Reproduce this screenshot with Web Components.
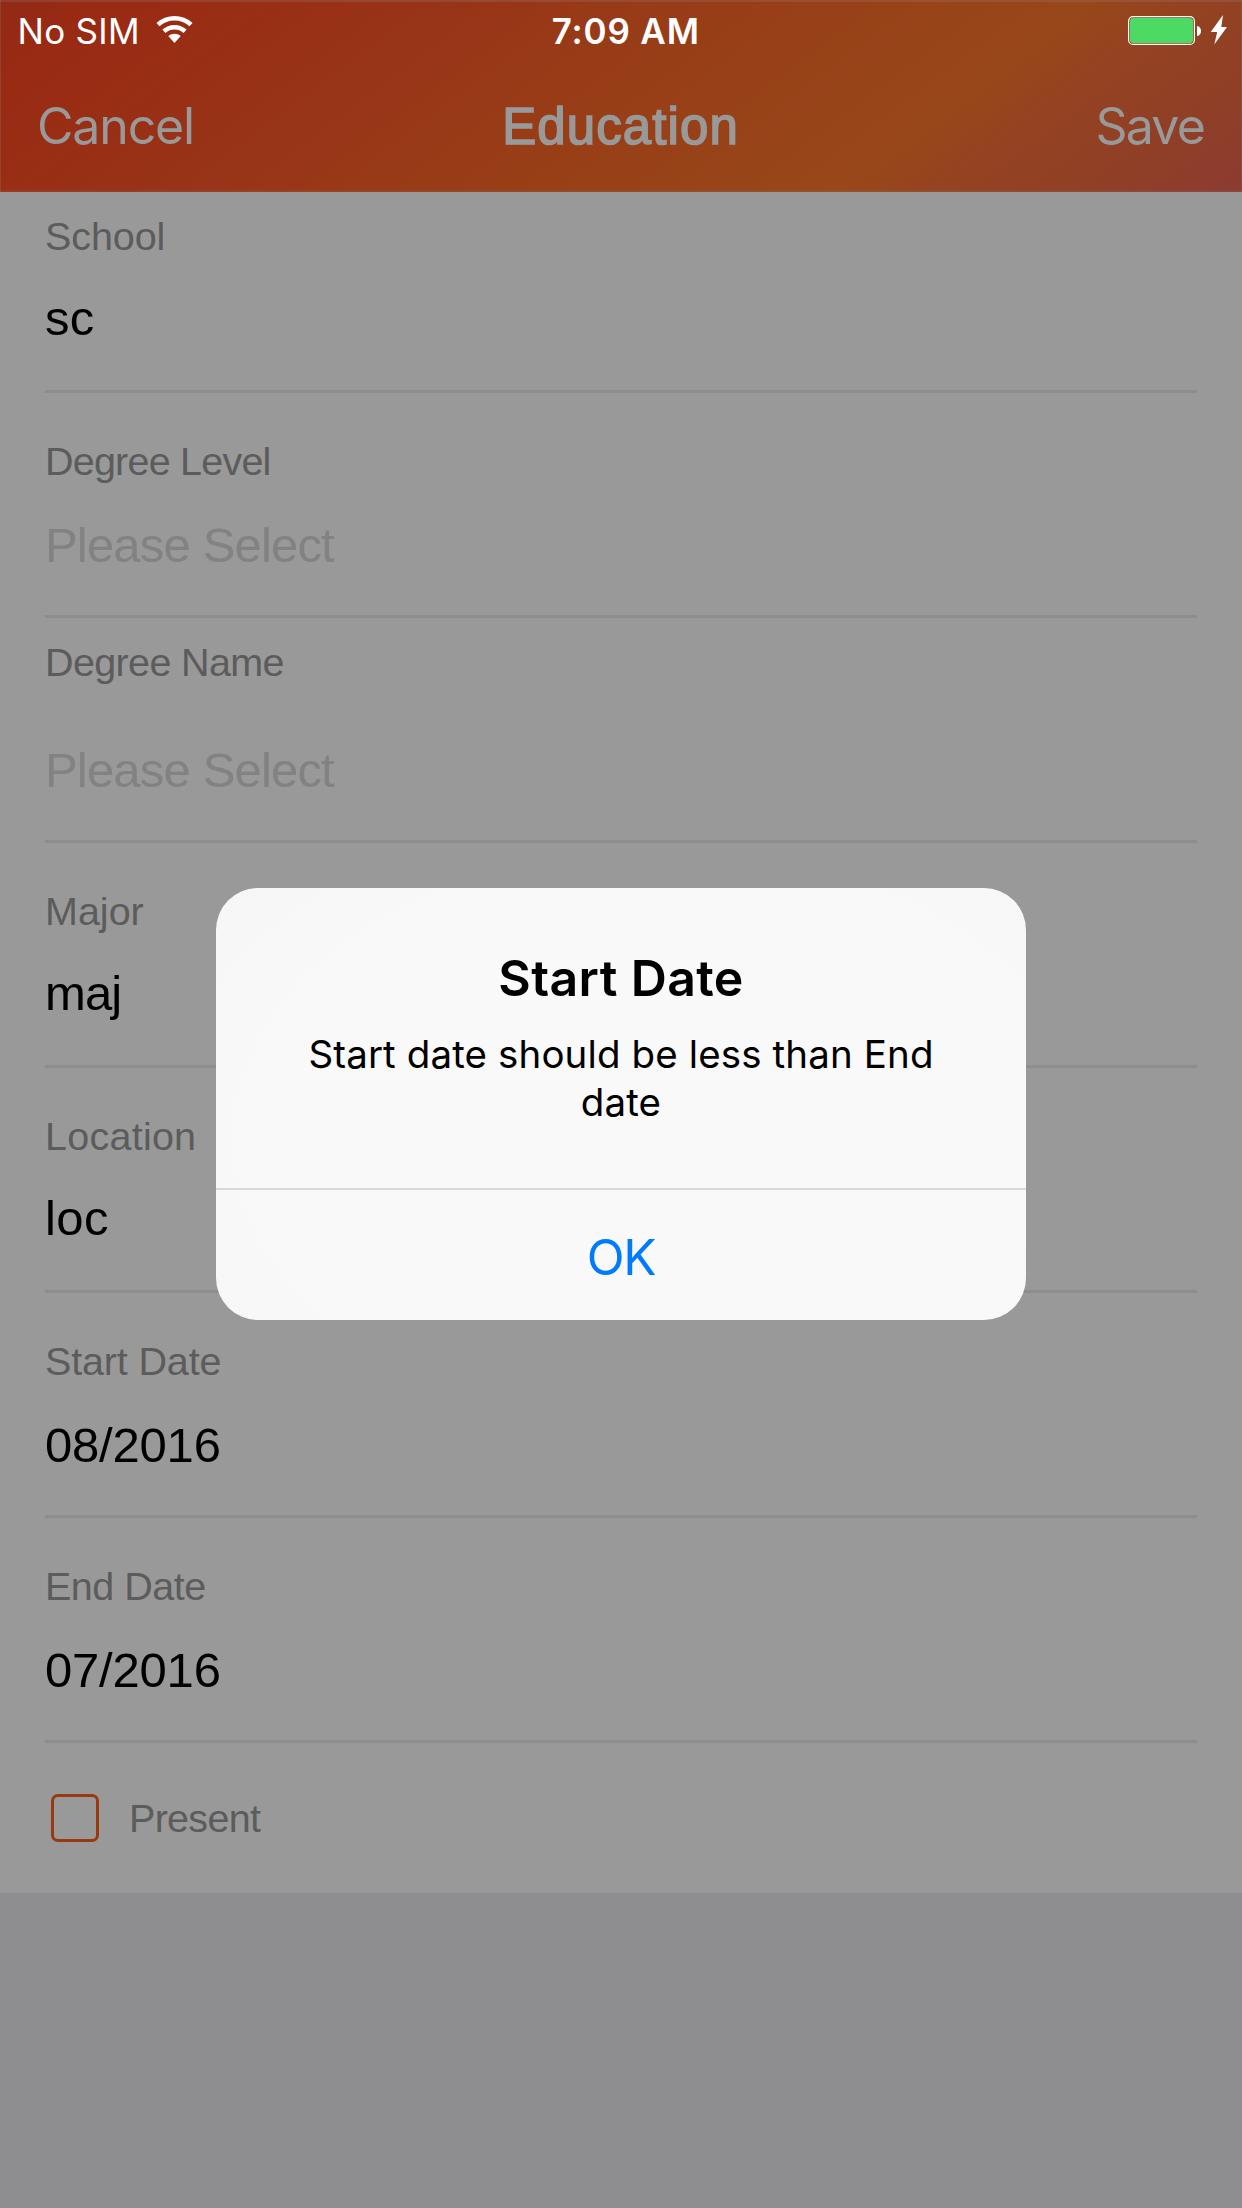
<!DOCTYPE html>
<html lang="en">
<head>
<meta charset="utf-8">
<title>Education</title>
<style>
html,body{margin:0;padding:0;height:100%}
body{background:#8e8e91;font-family:"Liberation Sans",sans-serif}
</style>
</head>
<body>
<education-screen></education-screen>

<template id="t-screen">
<style>
:host{display:flex;flex-direction:column;height:2208px;width:1242px;background:#8e8e91;position:relative;overflow:hidden}
header{box-sizing:border-box;height:192px;display:flex;flex-direction:column;gap:34px;
  background:linear-gradient(143deg,#902a16 0%,#992a13 7%,#983417 30%,#983e17 50%,#98471a 73%,#944221 80%,#8f3f27 91%,#8c3b30 99%);
  box-shadow:inset 0 2px 0 rgba(150,150,150,.2),inset 0 -2px 0 rgba(150,150,150,.12),inset 1px 0 0 rgba(150,150,150,.2),inset -1px 0 0 rgba(150,150,150,.2)}
main{background:#999;height:1701px;display:flex;flex-direction:column}
</style>
<header>
  <status-bar></status-bar>
  <nav-bar><span slot="left">Cancel</span><span slot="title">Education</span><span slot="right">Save</span></nav-bar>
</header>
<main>
  <form-field class="first" style="--ls:-.1px;--vs:.3px"><span slot="label">School</span>sc</form-field>
  <form-field picker placeholder style="--ls:-.78px;--vs:-.83px"><span slot="label">Degree Level</span>Please Select</form-field>
  <form-field picker placeholder class="raised" style="--ls:-.64px;--vs:-.83px"><span slot="label">Degree Name</span>Please Select</form-field>
  <form-field style="--ls:0px;--vs:-.9px"><span slot="label">Major</span>maj</form-field>
  <form-field style="--ls:.25px;--vs:.4px"><span slot="label">Location</span>loc</form-field>
  <form-field picker style="--ls:-.15px;--vs:-.2px"><span slot="label">Start Date</span>08/2016</form-field>
  <form-field picker style="--ls:-.5px;--vs:-.2px"><span slot="label">End Date</span>07/2016</form-field>
  <check-row>Present</check-row>
</main>
<alert-dialog><span slot="title">Start Date</span>Start date should be less than End date<span slot="action">OK</span></alert-dialog>
</template>

<template id="t-status">
<style>
:host{display:grid;grid-template-columns:1fr auto 1fr;height:62px;font:400 35px/62px Inter,sans-serif;color:#fff;box-sizing:border-box;padding:0 15px 0 17.5px}
.l,.r{display:flex;align-items:flex-start}
.l span{letter-spacing:.28px;width:138px}
.t{font-weight:600;letter-spacing:.85px;padding-left:7px}
.r{justify-content:flex-end}
svg{display:block}
.wifi{margin-top:15px}
</style>
<div class="l"><span>No SIM</span>
<svg class="wifi" width="37" height="29" viewBox="-18.5 -28 37 29"><g fill="none" stroke="#fff"><path stroke-width="4.6" d="M-16.5-18.4A24.7 24.7 0 0 1 16.5-18.4"/><path stroke-width="4.6" d="M-10.6-11.7A15.8 15.8 0 0 1 10.6-11.7"/></g><path fill="#fff" d="M0 0-6.2-6.9A9.3 9.3 0 0 1 6.2-6.9Z"/></svg></div>
<div class="t">7:09 AM</div>
<div class="r"><svg width="100" height="60" viewBox="1127 0 100 60"><rect x="1128.6" y="16.6" width="65.8" height="27.8" rx="4.5" fill="none" stroke="#fff" stroke-width="1.2"/><rect x="1130" y="18" width="63" height="25" rx="3" fill="#4cd964"/><path fill="#fff" d="M1197 26c2.8 .4 4 2.4 4 5s-1.200 4.600-4 5z"/><path fill="#fff" d="M1223 15 1210.700 32H1217.200L1214.300 44.500 1227 27H1221.300Z"/></svg></div>
</template>

<template id="t-nav">
<style>
:host{display:grid;grid-template-columns:1fr auto 1fr;align-items:baseline;height:60px;box-sizing:border-box;padding:0 38px 0 37px;font:400 50px/60px Inter,sans-serif;color:#999}
.l{letter-spacing:-1.15px}
.t{font:400 51px/57px "Liberation Sans",sans-serif;letter-spacing:1.1px;-webkit-text-stroke:1.6px #999}
.r{text-align:right;letter-spacing:-1.8px}
</style>
<div class="l"><slot name="left"></slot></div><div class="t"><slot name="title"></slot></div><div class="r"><slot name="right"></slot></div>
</template>

<template id="t-field">
<style>
:host{display:flex;flex-direction:column;gap:28px;box-sizing:border-box;height:225px;margin:0 45px;padding-top:44px;border-bottom:3px solid #8d8d8d;flex:none}
:host([picker]){gap:30px}
:host(.raised){padding-top:20px;gap:54px}
:host(.first){padding-top:20px;height:201px}
.label{font-size:39.5px;line-height:48px;color:#5c5c5c;letter-spacing:var(--ls)}
.value{font-size:49px;line-height:60px;color:#000;letter-spacing:var(--vs)}
:host([placeholder]) .value{color:#828282}
</style>
<div class="label"><slot name="label"></slot></div><div class="value"><slot></slot></div>
</template>

<template id="t-check">
<style>
:host{display:flex;gap:30px;height:150px;box-sizing:border-box;padding:51px 51px 0;font-size:39.5px;line-height:48px;letter-spacing:-.7px;color:#5c5c5c}
i{box-sizing:border-box;width:48px;height:48px;border:3px solid #983a10;border-radius:7px}
</style>
<i></i><slot></slot>
</template>

<template id="t-alert">
<style>
:host{position:absolute;left:216px;top:888px;width:810px;height:432px;border-radius:42px;overflow:hidden;display:flex;flex-direction:column;text-align:center;color:#000;font-family:Inter,sans-serif;
 background:radial-gradient(ellipse 75% 95% at 55% 58%,#f9f9f9 65%,#f5f5f5 110%)}
.body{box-sizing:border-box;height:300px;padding:60px 48px 0;display:flex;flex-direction:column;gap:22px}
.title{font-weight:600;font-size:50px;line-height:60px;letter-spacing:.38px}
.msg{font-size:38.5px;line-height:48px;letter-spacing:.12px}
.act{border-top:2px solid #d8d8dd;color:#007aff;font-size:49.5px;line-height:60px;letter-spacing:-1.3px;padding-top:37px}
</style>
<div class="body"><div class="title"><slot name="title"></slot></div><div class="msg"><slot></slot></div></div>
<div class="act"><slot name="action"></slot></div>
</template>

<script>
const define = (name, id) => customElements.define(name, class extends HTMLElement {
  constructor() {
    super();
    this.attachShadow({ mode: 'open' }).append(document.getElementById(id).content.cloneNode(true));
  }
});
define('status-bar', 't-status');
define('nav-bar', 't-nav');
define('form-field', 't-field');
define('check-row', 't-check');
define('alert-dialog', 't-alert');
define('education-screen', 't-screen');
</script>
</body>
</html>
